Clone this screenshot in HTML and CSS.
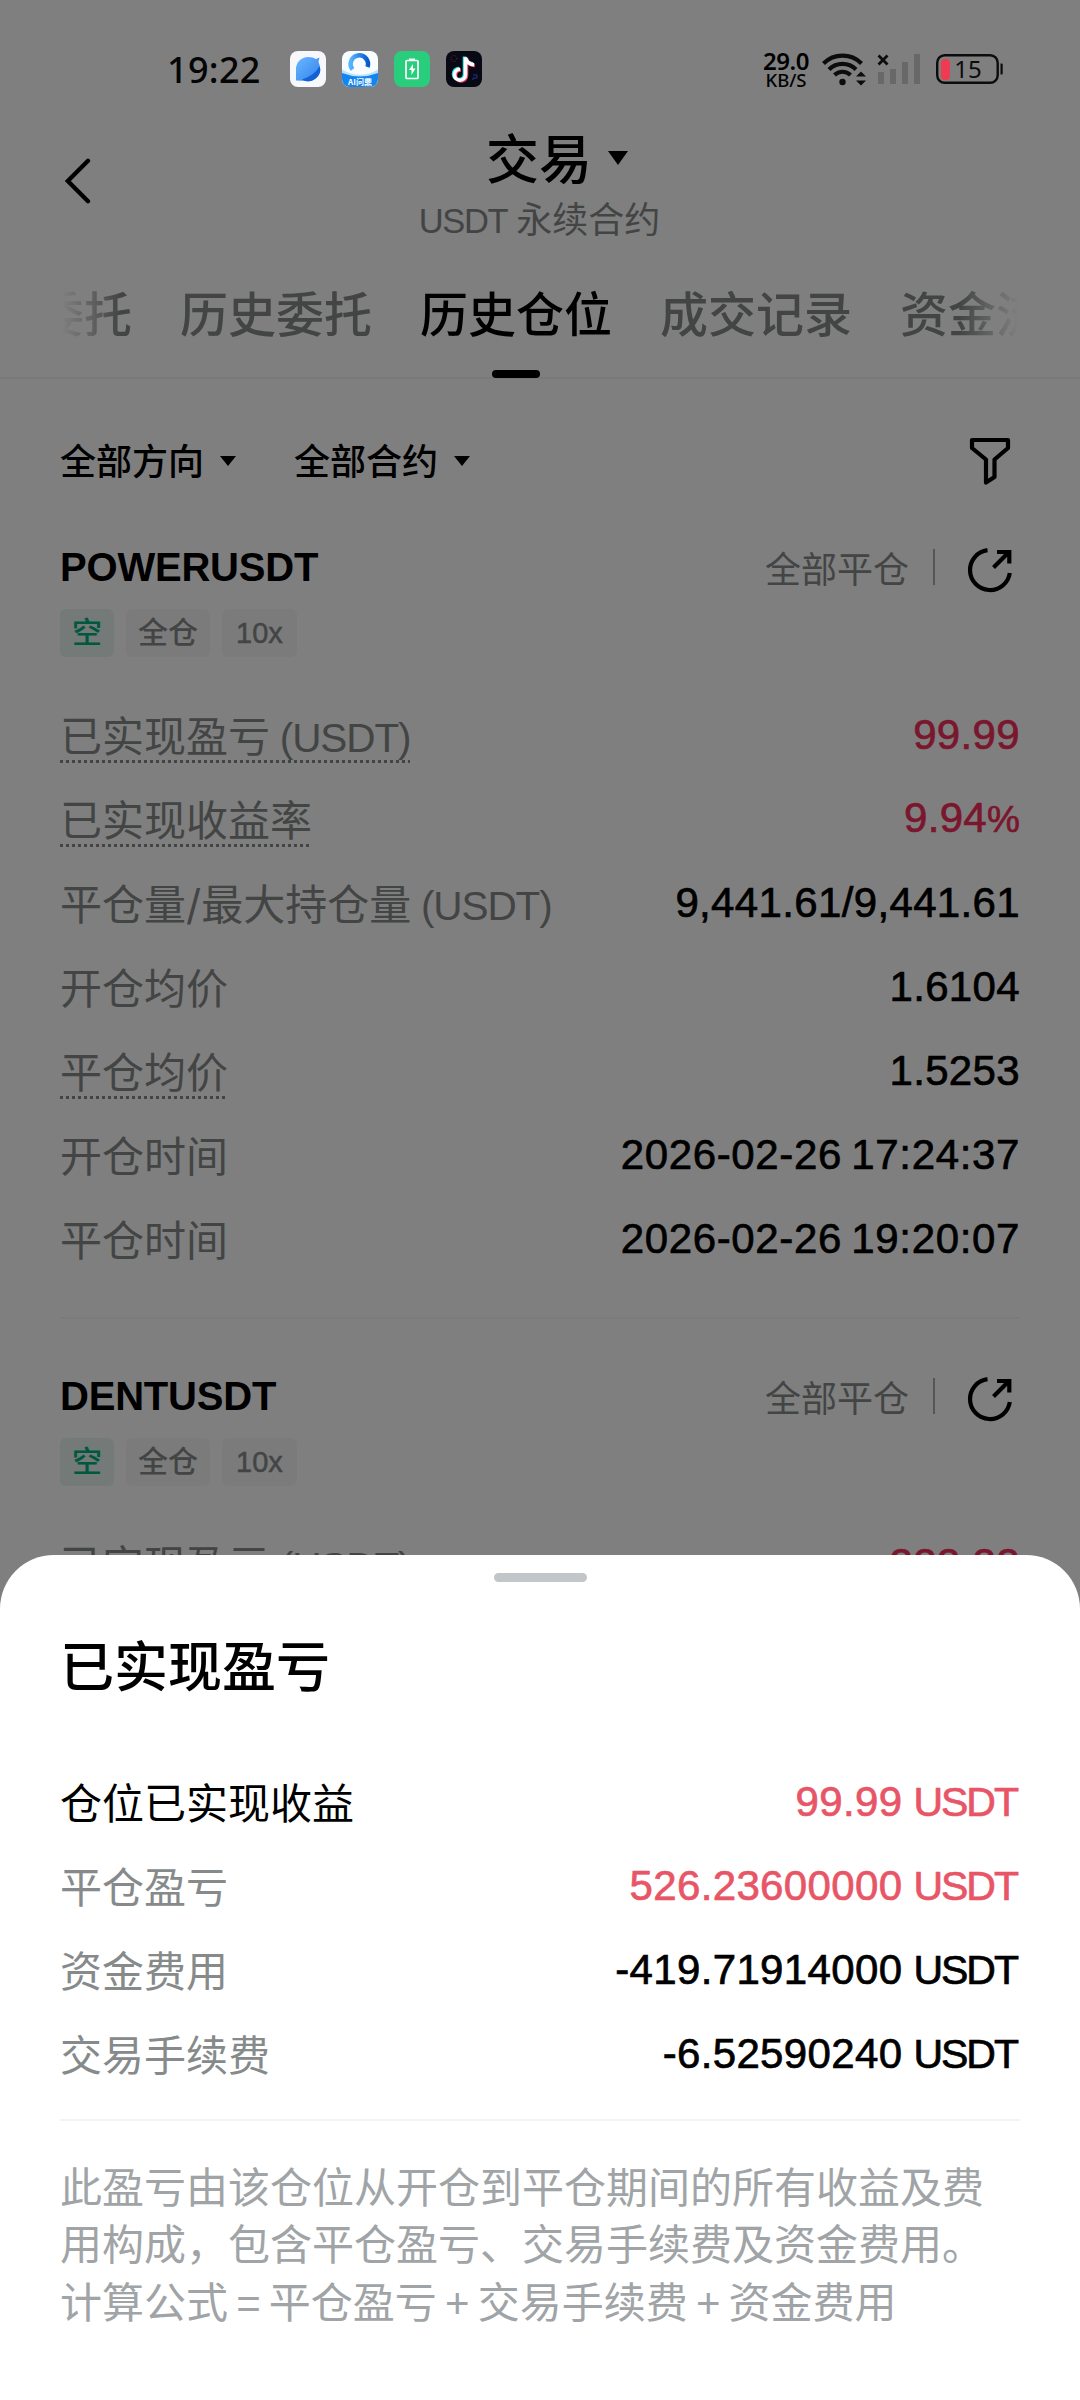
FILE: index.html
```html
<!DOCTYPE html>
<html lang="zh-CN">
<head>
<meta charset="utf-8">
<title>交易</title>
<link rel="stylesheet" href="styles.css">
</head>
<body>
<div class="screen">
  <main class="page">
    <header class="nav">
      <svg class="back" viewBox="0 0 28 48"><path d="M25 3.700 4.800 24 25 44.300" fill="none" stroke="#000" stroke-width="4.300" stroke-linecap="round"/></svg>
      <div class="nav-center">
        <div class="nav-title">交易<i class="caret caret-lg"></i></div>
        <div class="nav-sub"><span class="lat">USDT</span> 永续合约</div>
      </div>
    </header>
    <nav class="tabs">
      <div class="tabs-track">
        <span>当前委托</span><span>历史委托</span><span class="active">历史仓位</span><span>成交记录</span><span>资金流水</span>
      </div>
    </nav>
    <div class="filters">
      <span>全部方向<i class="caret"></i></span>
      <span>全部合约<i class="caret"></i></span>
      <svg class="funnel" viewBox="0 0 44 50"><path d="M3 4h36v8L25.500 23.500V41L17 46.500V23.500L3 12Z" fill="none" stroke="#000" stroke-width="4.200" stroke-linejoin="round"/></svg>
    </div>
    <section class="card">
      <div class="card-head">
        <h2>POWERUSDT</h2>
        <span class="state">全部平仓</span><i class="sep"></i>
        <svg class="share" viewBox="0 0 46 46"><path d="M20.500 3.200A20 20 0 1 0 42.800 26M26.500 20.500 42 5M30 5H42.300V16.500" fill="none" stroke="#000" stroke-width="4.200"/></svg>
      </div>
      <div class="tags"><span class="tag short">空</span><span class="tag">全仓</span><span class="tag lev">10x</span></div>
      <dl class="rows">
        <div><dt class="hint">已实现盈亏 <span class="lat">(USDT)</span></dt><dd class="loss">99.99</dd></div>
        <div><dt class="hint">已实现收益率</dt><dd class="loss">9.94<span class="pct">%</span></dd></div>
        <div><dt>平仓量/最大持仓量 <span class="lat">(USDT)</span></dt><dd>9,441.61/9,441.61</dd></div>
        <div><dt>开仓均价</dt><dd>1.6104</dd></div>
        <div><dt class="hint">平仓均价</dt><dd>1.5253</dd></div>
        <div><dt>开仓时间</dt><dd class="time">2026-02-26 17:24:37</dd></div>
        <div><dt>平仓时间</dt><dd class="time">2026-02-26 19:20:07</dd></div>
      </dl>
    </section>
    <section class="card">
      <div class="card-head">
        <h2>DENTUSDT</h2>
        <span class="state">全部平仓</span><i class="sep"></i>
        <svg class="share" viewBox="0 0 46 46"><path d="M20.500 3.200A20 20 0 1 0 42.800 26M26.500 20.500 42 5M30 5H42.300V16.500" fill="none" stroke="#000" stroke-width="4.200"/></svg>
      </div>
      <div class="tags"><span class="tag short">空</span><span class="tag">全仓</span><span class="tag lev">10x</span></div>
      <dl class="rows">
        <div><dt class="hint">已实现盈亏 <span class="lat">(USDT)</span></dt><dd class="loss">222.22</dd></div>
      </dl>
    </section>
  </main>
  <div class="mask"></div>
  <div class="status">
    <span class="clock">19:22</span>
    <svg class="app" viewBox="0 0 36 36"><defs><linearGradient id="g1" x1="0" y1="0" x2="1" y2="1"><stop offset="0" stop-color="#6cb8ff"/><stop offset="1" stop-color="#2f82ee"/></linearGradient></defs><rect width="36" height="36" rx="8" fill="#f6f8fb"/><path d="M6 29.500V18A12 12 0 0 1 18 6q5 0 8 2l3.500-1.500-1 4.500q1.500 3 1.500 7A12 12 0 0 1 18 30Z" fill="url(#g1)"/><path d="M29.800 15Q24 25 12 28.500A12 12 0 0 0 29.800 15Z" fill="#1261d5"/></svg>
    <svg class="app" viewBox="0 0 36 36"><defs><clipPath id="c1"><rect width="36" height="36" rx="8"/></clipPath><linearGradient id="g2" x1="0" y1="0" x2="1" y2="0"><stop offset="0" stop-color="#54b6ff"/><stop offset="1" stop-color="#0759cf"/></linearGradient></defs><g clip-path="url(#c1)"><rect width="36" height="36" fill="#fafdff"/><path d="M0 18.500Q18 29 36 18.500V36H0Z" fill="#b8e2fd"/><path d="M0 22Q18 29 36 22V36H0Z" fill="#1484ee"/><path d="M10.500 18.500A8.700 8.700 0 1 1 25.500 16" fill="none" stroke="url(#g2)" stroke-width="4.500"/><text x="18" y="34" text-anchor="middle" class="app-label">AI问鼎</text></g></svg>
    <svg class="app" viewBox="0 0 36 36"><rect width="36" height="36" rx="8" fill="#28ce7b"/><rect x="12" y="9.500" width="12" height="18" rx="1" fill="none" stroke="#fff" stroke-width="1.700"/><path d="M15 7.500h6v2h-6z" fill="#fff"/><path d="m19 13-4 6h2.500v5l4-6.500H19Z" fill="#fff"/></svg>
    <svg class="app" viewBox="0 0 36 36"><rect width="36" height="36" rx="8" fill="#070a14"/><g fill="none" stroke-width="3.600"><path d="M18.500 5.500v17.500a5.500 5.500 0 1 1-5.500-5.500M18.500 6q1.500 6.500 8.500 7" stroke="#25dfe2"/><path d="M20.500 7v17.500a5.500 5.500 0 1 1-5.500-5.500M20.500 7.500q1.500 6.500 8.500 7" stroke="#f3395c"/><path d="M19.500 6.200v17.500a5.500 5.500 0 1 1-5.500-5.500M19.500 6.700q1.500 6.500 8.500 7" stroke="#fff"/></g><circle cx="8" cy="7.500" r="3" fill="none" stroke="#7c1c3a" stroke-dasharray="1 1.500"/><path d="M27 24h4v3h-4v2" fill="none" stroke="#293086"/></svg>
    <div class="speed"><b>29.0</b><span>KB/S</span></div>
    <svg class="wifi" viewBox="0 0 46 34"><g fill="none" stroke="#0c0c0c" stroke-width="4.200"><path d="M1.500 11.500a27 27 0 0 1 38 0M7 17.500a19 19 0 0 1 27 0M12.500 23a11.500 11.500 0 0 1 16 0"/></g><circle cx="20.500" cy="30" r="3.200" fill="#0c0c0c"/><path d="m39 19.500 5 5H34ZM34 28.500h10l-5 5Z" fill="#0c0c0c"/></svg>
    <svg class="signal" viewBox="0 0 44 32"><path d="M1 19h6v12H1ZM13 16h6v15h-6ZM25 9h6v22h-6ZM37 1h6v30h-6Z" fill="#686868"/><path d="m1.500 2.500 9 9m0-9-9 9" stroke="#0c0c0c" stroke-width="2.800"/></svg>
    <svg class="battery" viewBox="0 0 68 30"><rect x="1.200" y="1.200" width="60.500" height="27.600" rx="7.500" fill="none" stroke="#0c0c0c" stroke-width="2.400"/><rect x="5" y="5" width="9" height="21" rx="4" fill="#ee3b52"/><path d="M64.500 9.500h1.200q1 0 1 1v9q0 1-1 1h-1.200Z" fill="#0c0c0c"/><text x="32" y="23.500" text-anchor="middle" class="batt-num">15</text></svg>
  </div>
  <section class="sheet">
    <i class="grip"></i>
    <h1>已实现盈亏</h1>
    <dl class="rows">
      <div><dt class="strong">仓位已实现收益</dt><dd class="loss">99.99 <span class="unit">USDT</span></dd></div>
      <div><dt>平仓盈亏</dt><dd class="loss">526.23600000 <span class="unit">USDT</span></dd></div>
      <div><dt>资金费用</dt><dd>-419.71914000 <span class="unit">USDT</span></dd></div>
      <div><dt>交易手续费</dt><dd>-6.52590240 <span class="unit">USDT</span></dd></div>
    </dl>
    <p class="note">此盈亏由该仓位从开仓到平仓期间的所有收益及费<br>用构成，包含平仓盈亏、交易手续费及资金费用。<br>计算公式 = 平仓盈亏 + 交易手续费 + 资金费用</p>
  </section>
</div>
</body>
</html>
```

FILE: styles.css
```css
* { box-sizing: border-box; }
body, h1, h2, p, dl, dt, dd { margin: 0; }
body { background: #fff; font-family: "Inter", "Noto Sans CJK SC", sans-serif; color: #000; }
svg { display: block; flex: none; }
.screen { position: relative; width: 1080px; height: 2400px; overflow: hidden; }
.page { padding-top: 124px; }
.mask { position: absolute; inset: 0; background: rgba(0, 0, 0, .5); }

.status { position: absolute; top: 0; left: 0; width: 1080px; height: 138px; padding-left: 167px; display: flex; align-items: center; }
.clock { width: 123px; font: 500 36px "Noto Sans", sans-serif; letter-spacing: .3px; color: #050505; white-space: nowrap; }
.app { width: 36px; height: 36px; margin-right: 16px; }
.app-label { font: 700 8px "Noto Sans CJK SC", sans-serif; fill: #fff; }
.speed { width: 50px; margin-left: 263px; display: flex; flex-direction: column; align-items: center; font: 500 18.5px/18px "Noto Sans", sans-serif; white-space: nowrap; }
.speed b { font-size: 24px; line-height: 21px; font-weight: 600; letter-spacing: -.4px; }
.wifi { width: 46px; height: 34px; margin-left: 11px; }
.signal { width: 44px; height: 32px; margin-left: 9px; }
.battery { width: 68px; height: 30px; margin-left: 15px; }
.batt-num { font: 400 24px "Noto Sans", sans-serif; fill: #0c0c0c; }

.nav { display: grid; grid-template-columns: 140px 1fr 140px; height: 130px; }
.back { width: 28px; height: 48px; margin: 33px 0 0 63px; }
.nav-center { text-align: center; }
.nav-title { display: flex; align-items: center; justify-content: center; gap: 16px; height: 72px; padding-left: 34px; font-size: 53px; font-weight: 500; line-height: 74px; }
.nav-sub { padding-right: 1px; font-size: 36px; line-height: 48px; color: #868a8a; font-weight: 400; word-spacing: -1px; }
.nav-sub .lat { font-size: 34.5px; letter-spacing: -1.4px; }
.caret { display: inline-block; margin-top: 3px; border: 8px solid transparent; border-top: 10px solid #000; border-bottom: 0; }
.caret-lg { border-width: 14px 10.5px 0; margin-top: -4px; }

.tabs { height: 125px; border-bottom: 2px solid #f2f3f3; padding: 0 61px; }
.tabs-track { width: 958px; height: 125px; overflow: hidden; display: flex; gap: 48px; font-size: 48px; font-weight: 500; line-height: 122px; color: #868a8a; white-space: nowrap; -webkit-mask-image: linear-gradient(90deg, transparent, #000 60px, #000 898px, transparent); mask-image: linear-gradient(90deg, transparent, #000 60px, #000 898px, transparent); }
.tabs-track span { flex: none; }
.tabs-track span:first-child { margin-left: -121px; }
.tabs-track .active { color: #000; display: flex; flex-direction: column; align-items: center; }
.tabs-track .active::after { content: ""; width: 48px; height: 8px; margin-top: -6px; border-radius: 4px; background: #000; }

.filters { display: flex; align-items: center; height: 158px; padding: 2px 67px 0 60px; gap: 58px; font-size: 36px; font-weight: 500; }
.filters span { display: flex; align-items: center; gap: 16px; }
.funnel { width: 44px; height: 50px; margin: 4px 0 0 auto; }

.card { padding: 0 60px; height: 829px; }
.card-head { display: flex; align-items: center; height: 60px; }
.card h2 { flex: 1; font-family: "Liberation Sans", sans-serif; font-size: 40px; line-height: 54px; font-weight: 700; letter-spacing: -.2px; padding-bottom: 1px; }
.state { font-size: 36px; color: #868a8a; }
.sep { width: 2px; height: 36px; margin: 0 32px 0 24px; background: #aaadad; }
.share { width: 46px; height: 46px; margin: 6px 7px 0 0; }
.tags { display: flex; gap: 12px; margin-top: 12px; }
.tag { height: 48px; padding: 0 12px; border-radius: 6px; background: #f6f7f7; color: #868a8a; font-size: 30px; line-height: 47px; font-weight: 500; }
.tag.short { color: #00b07c; background: #e6f4f0; }
.tag.lev { font-family: "Liberation Sans", sans-serif; font-size: 29px; line-height: 49px; padding: 0 14px; -webkit-text-stroke: .5px currentColor; }

.rows { font-size: 42px; }
.card .rows { margin-top: 36px; padding-bottom: 36px; }
.card:nth-of-type(1) .rows { border-bottom: 2px solid #f6f6f6; }
.rows > div { display: flex; justify-content: space-between; align-items: center; height: 84px; }
dt { color: #868a8a; line-height: 57px; height: 55px; white-space: nowrap; word-spacing: -2px; }
dt.strong { color: #000; }
dt.hint { background: repeating-linear-gradient(90deg, #868a8a 0 3px, transparent 3px 6px) left bottom / 100% 3px no-repeat; }
.lat { font-family: "Liberation Sans", sans-serif; font-size: 40.5px; letter-spacing: -1.1px; }
dd { font-family: "Liberation Sans", sans-serif; font-size: 42px; line-height: 54px; padding-bottom: 1px; letter-spacing: .35px; -webkit-text-stroke: .7px currentColor; white-space: nowrap; }
.time { letter-spacing: .65px; word-spacing: -3px; }
.pct { font-size: 37px; letter-spacing: 0; }
.card .loss { color: #f42f5c; }
.unit { font-size: 41px; letter-spacing: -2px; margin: 0 3px 0 -1px; }

.sheet { position: absolute; left: 0; top: 1555px; width: 1080px; height: 845px; padding: 18px 60px 0; border-radius: 54px 54px 0 0; background: #fff; }
.grip { display: block; width: 93px; height: 9px; margin: 0 auto; border-radius: 5px; background: #c3c6c8; }
.sheet h1 { margin-top: 50px; font-size: 54px; line-height: 72px; font-weight: 500; }
.sheet .rows { margin-top: 56px; padding-bottom: 23px; border-bottom: 2px solid #f2f3f3; }
.sheet .loss { color: #e85566; }
.note { margin-top: 39px; font-family: "Liberation Sans", "Noto Sans CJK SC", sans-serif; font-size: 42px; line-height: 57.3px; color: #a0a4a6; word-spacing: -3.5px; white-space: nowrap; }
```
